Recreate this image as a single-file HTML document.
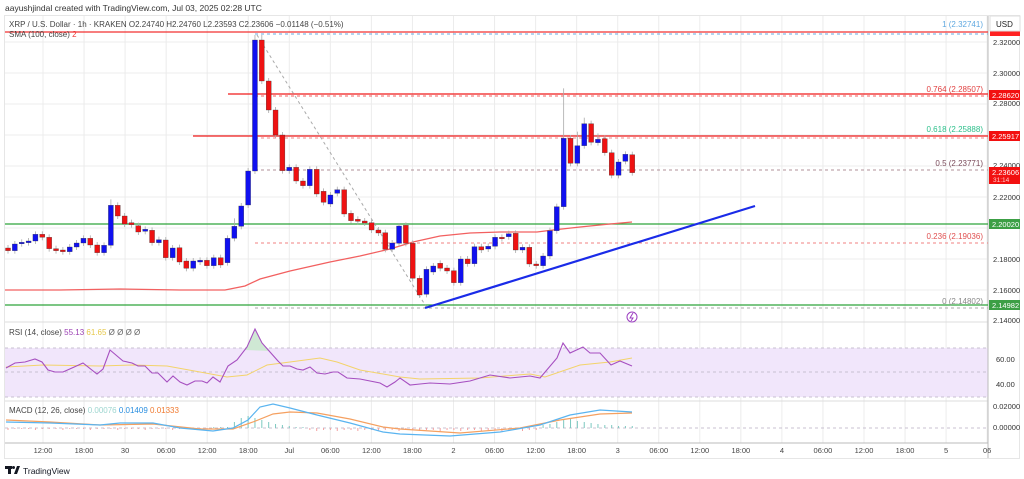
<!DOCTYPE html>
<html><head><meta charset="utf-8">
<style>
html,body{margin:0;padding:0;background:#fff;width:1024px;height:479px;overflow:hidden;font-family:"Liberation Sans",sans-serif}
svg{position:absolute;left:0;top:0}
text{font-family:"Liberation Sans",sans-serif}
</style></head><body>
<svg id="s" width="1024" height="479" viewBox="0 0 1024 479" xmlns="http://www.w3.org/2000/svg">
<rect x="0" y="0" width="1024" height="479" fill="#fff"/>
<text x="5" y="11" font-size="8.5" fill="#333">aayushjindal created with TradingView.com, Jul 03, 2025 02:28 UTC</text>
<rect x="4.5" y="15.5" width="1015" height="443" fill="none" stroke="#e6e6e6"/>
<g id="grid" stroke="#ececec" stroke-width="1"></g>
<rect x="5" y="348" width="983" height="49" fill="#f1e6fb"/>
<g stroke="#c8c0d0" stroke-dasharray="3,3" stroke-width="1">
<line x1="5" y1="348" x2="988" y2="348"/><line x1="5" y1="372" x2="988" y2="372"/><line x1="5" y1="397" x2="988" y2="397"/>
<line x1="5" y1="428" x2="988" y2="428"/>
</g>
<line x1="5" y1="322" x2="988" y2="322" stroke="#ddd"/>
<line x1="5" y1="401" x2="988" y2="401" stroke="#ddd"/>
<line x1="5" y1="443" x2="988" y2="443" stroke="#bbb"/>
<line x1="988" y1="16" x2="988" y2="458" stroke="#bbb"/>
<line x1="5" y1="32" x2="988" y2="32" stroke="#f23030" stroke-width="1.3"/>
<line x1="255" y1="34" x2="988" y2="34" stroke="#6aa8e0" stroke-dasharray="3,3"/>
<line x1="228" y1="94" x2="988" y2="94" stroke="#f01a1a" stroke-width="1.3"/>
<line x1="255" y1="96" x2="988" y2="96" stroke="#f06060" stroke-dasharray="3,3"/>
<line x1="193" y1="136" x2="988" y2="136" stroke="#f01a1a" stroke-width="1.3"/>
<line x1="255" y1="138" x2="988" y2="138" stroke="#e88" stroke-dasharray="3,3"/>
<line x1="255" y1="170" x2="988" y2="170" stroke="#b09098" stroke-dasharray="3,3"/>
<line x1="5" y1="224" x2="988" y2="224" stroke="#2ea43a" stroke-width="1.2"/>
<line x1="255" y1="243" x2="988" y2="243" stroke="#f08080" stroke-dasharray="3,3"/>
<line x1="5" y1="305" x2="988" y2="305" stroke="#2ea43a" stroke-width="1.2"/>
<line x1="255" y1="308" x2="988" y2="308" stroke="#aaa" stroke-dasharray="3,3"/>
<line x1="257" y1="35" x2="427" y2="308" stroke="#aaa" stroke-dasharray="3,3"/>
<polyline fill="none" stroke="#f26060" stroke-width="1.3" points="5,290 60,290 120,289 180,290 225,290 245,286 260,279 290,271 330,262 360,256 390,249 413,242 440,236 470,233 500,232 537,232 553,230 580,227 610,224 632,222"/>
<g id="candles"></g>
<line x1="425" y1="308" x2="755" y2="206" stroke="#1a2be8" stroke-width="2.2"/>
<g font-size="8" text-anchor="end">
<text x="983" y="27" fill="#5fa8e0">1 (2.32741)</text>
<text x="983" y="92" fill="#e04040">0.764 (2.28507)</text>
<text x="983" y="132" fill="#2bbf8a">0.618 (2.25888)</text>
<text x="983" y="166" fill="#7a4a5a">0.5 (2.23771)</text>
<text x="983" y="239" fill="#e05050">0.236 (2.19036)</text>
<text x="983" y="304" fill="#888">0 (2.14802)</text>
</g>
<text x="9" y="27" font-size="8" fill="#444">XRP / U.S. Dollar · 1h · KRAKEN  O2.24740  H2.24760  L2.23593  C2.23606  −0.01148 (−0.51%)</text>
<text x="9" y="37" font-size="8" fill="#444">SMA (100, close) <tspan fill="#e33">2</tspan></text>
<g font-size="7.5" fill="#333">
<text x="993" y="45">2.32000</text><text x="993" y="76">2.30000</text><text x="993" y="106">2.28000</text>
<text x="993" y="168">2.24000</text><text x="993" y="200">2.22000</text><text x="993" y="262">2.18000</text>
<text x="993" y="293">2.16000</text><text x="993" y="323">2.14000</text>
<text x="996" y="362">60.00</text><text x="996" y="387">40.00</text>
<text x="993" y="409">0.02000</text><text x="993" y="430">0.00000</text>
</g>
<rect x="990" y="30" width="30" height="6" fill="#f22"/>
<rect x="990" y="16" width="30" height="15" fill="#fff" stroke="#ddd"/>
<text x="996" y="27" font-size="8" fill="#222">USD</text>
<rect x="989" y="90" width="31" height="10" fill="#f21010"/><text x="992" y="98" font-size="7.5" fill="#fff">2.28620</text>
<rect x="989" y="131" width="31" height="10" fill="#f21010"/><text x="992" y="139" font-size="7.5" fill="#fff">2.25917</text>
<rect x="989" y="167" width="31" height="17" fill="#f21010"/><text x="992" y="175" font-size="7.5" fill="#fff">2.23606</text><text x="993" y="182" font-size="6.5" fill="#fcc">31:14</text>
<rect x="989" y="219" width="31" height="10" fill="#3c9f45"/><text x="992" y="227" font-size="7.5" fill="#fff">2.20020</text>
<rect x="989" y="300" width="31" height="10" fill="#3c9f45"/><text x="992" y="308" font-size="7.5" fill="#fff">2.14982</text>
<text x="9" y="335" font-size="8" fill="#444">RSI (14, close) <tspan fill="#9b3fb3">55.13</tspan> <tspan fill="#e6c84a">61.65</tspan> <tspan fill="#666">Ø Ø Ø Ø</tspan></text>
<path d="M245,350 L255,329 L262,343 L270,351 Z" fill="#cfe8d4"/>
<polyline fill="none" stroke="#f3d36a" stroke-width="1" points="6,367 43,365 100,366 133,365 167,366 200,372 227,377 247,375 267,365 290,362 320,358 337,362 360,370 400,377 420,379 480,378 530,374 545,377 580,365 610,362 632,358"/>
<polyline fill="none" stroke="#a64fc0" stroke-width="1.1" points="6,368 15,363 25,362 35,359 42,362 48,370 55,372 63,372 72,368 83,363 97,374 103,369 110,350 123,361 132,363 138,366 145,366 152,373 158,373 167,382 173,376 180,382 187,385 195,381 202,381 207,383 213,377 220,382 228,366 237,360 247,347 255,329 262,343 270,352 278,361 283,366 290,366 297,369 303,370 310,367 317,373 325,374 333,372 338,372 347,378 360,379 370,381 380,383 387,387 395,382 400,378 410,385 420,384 430,383 450,384 470,381 490,375 510,378 530,376 540,378 557,358 563,343 570,353 583,347 590,353 600,353 611,365 620,361 632,366"/>
<circle cx="632" cy="317" r="5" fill="none" stroke="#9b3fc0" stroke-width="1"/><path d="M633,313 L630,318 L633,318 L631,321" fill="none" stroke="#9b3fc0" stroke-width="1"/>
<text x="9" y="413" font-size="8" fill="#444">MACD (12, 26, close) <tspan fill="#9ed6d0">0.00076</tspan> <tspan fill="#2a8fe0">0.01409</tspan> <tspan fill="#f07a30">0.01333</tspan></text>
<g id="hist"></g>
<polyline fill="none" stroke="#f5a060" stroke-width="1.2" points="6,420 50,422 100,425 153,424 200,429 233,429 253,422 273,414 290,412 317,413 350,419 383,427 400,429 460,433 520,428 560,420 600,414 632,413"/>
<polyline fill="none" stroke="#5ab4f0" stroke-width="1.2" points="6,422 50,423 100,425 120,423 153,423 180,428 213,431 233,428 248,420 260,407 273,404 290,408 317,415 350,423 383,432 400,434 450,436 500,432 540,425 570,415 600,410 632,412"/>
<g font-size="7.5" fill="#444" text-anchor="middle" id="taxis"></g>
<g fill="#131722">
<rect x="5" y="466" width="7" height="3"/><rect x="8" y="466" width="3" height="8"/>
<circle cx="13.5" cy="467.5" r="1.5"/><path d="M14,474 L17,466 L20,466 L17,474 Z"/>
</g>
<text x="23" y="474" font-size="8.5" fill="#131722">TradingView</text>
</svg>
<script>
var NS="http://www.w3.org/2000/svg";
function el(p,t,a){var e=document.createElementNS(NS,t);for(var k in a)e.setAttribute(k,a[k]);p.appendChild(e);return e;}
var g=document.getElementById('grid');
[42,73,104,135,166,197,228,259,290].forEach(function(y){el(g,'line',{x1:5,y1:y,x2:988,y2:y});});
[360,385].forEach(function(y){el(g,'line',{x1:5,y1:y,x2:988,y2:y});});
var labs=["12:00","18:00","30","06:00","12:00","18:00","Jul","06:00","12:00","18:00","2","06:00","12:00","18:00","3","06:00","12:00","18:00","4","06:00","12:00","18:00","5","06"];
var ta=document.getElementById('taxis');
labs.forEach(function(l,i){var x=43+i*41.05;el(g,'line',{x1:x,y1:16,x2:x,y2:443});var t=el(ta,'text',{x:x,y:453});t.textContent=l;});
var A=[["r",684,692],["b",672,692],["b",667,671],["b",663,668],["b",643,663],["r",643,652],["r",652,686],["r",686,692],["r",690,695],["b",681,695],["b",669,681],["b",655,669],["r",655,675],["r",675,698],["b",676,698],["b",556,676],["r",556,588],["r",588,612],["r",608,614],["r",617,636],["b",628,634],["r",631,668],["b",659,668],["r",660,713],["b",684,713],["r",683,726],["r",723,745],["b",723,745],["b",721,726],["r",721,737],["b",713,737],["r",713,735],["b",655,728],["b",619,655],["b",558,619],["b",453,555],["b",60,453],["r",60,183],["r",183,270],["r",270,345],["r",345,452],["b",442,452],["r",442,483],["r",483,497],["b",448,497],["r",448,522],["r",514,547],["b",525,552]];
var B=[["b",509,520],["r",509,582],["r",580,602],["r",598,604],["r",603,609],["r",608,630],["r",630,639],["r",638,688],["b",669,688],["b",618,670],["r",616,670],["r",670,775],["r",775,825],["b",748,823],["b",738,756],["r",730,745],["r",744,753],["r",752,788],["b",717,788],["r",717,731],["b",680,731],["r",680,690],["b",679,687],["b",652,679],["r",652,656],["b",641,650],["r",640,690],["b",682,690],["r",682,732],["r",732,737],["b",708,737],["b",632,708],["b",560,632],["b",355,560],["r",355,430],["b",377,430],["b",311,377],["r",311,367],["b",358,368],["r",356,398],["r",398,466],["b",426,466],["b",403,424],["r",404,458]];
var all=A.concat(B);var cg=document.getElementById('candles');
var wickUp={36:5,37:5,15:6,33:8,81:50,83:14,84:6,86:6};
all.forEach(function(c,i){var x=8+i*6.86;var t=20+c[1]/3,b=20+c[2]/3;var col=c[0]=="b"?"#1010f0":"#ee1212";
var wu=wickUp[i]!==undefined?wickUp[i]:3,wd=3;
el(cg,'line',{x1:x,y1:t-wu,x2:x,y2:b+wd,stroke:"#aaa","stroke-width":0.8});
var h=Math.max(b-t,1.5);el(cg,'rect',{x:x-2.5,y:t,width:5,height:h,fill:col,stroke:"#333","stroke-width":0.3});});
var hg=document.getElementById('hist');
for(var i=0;i<92;i++){var x=8+i*6.86;var v;
if(i<30)v=(i%4==0)?2:1;else if(i<33)v=-1;else if(i<44)v=-[6,10,12,10,8,6,4,3,2,1,1][i-33];else if(i<78)v=(i%3==0?3:2);else v=-[3,4,6,8,9,7,6,5,4,3,3,2,2,2][i-78];
if(v!=0)el(hg,'line',{x1:x,y1:428,x2:x,y2:428+v,stroke:v>0?"#f4a0a0":"#7cc8c0","stroke-width":1});}
</script>
</body></html>
